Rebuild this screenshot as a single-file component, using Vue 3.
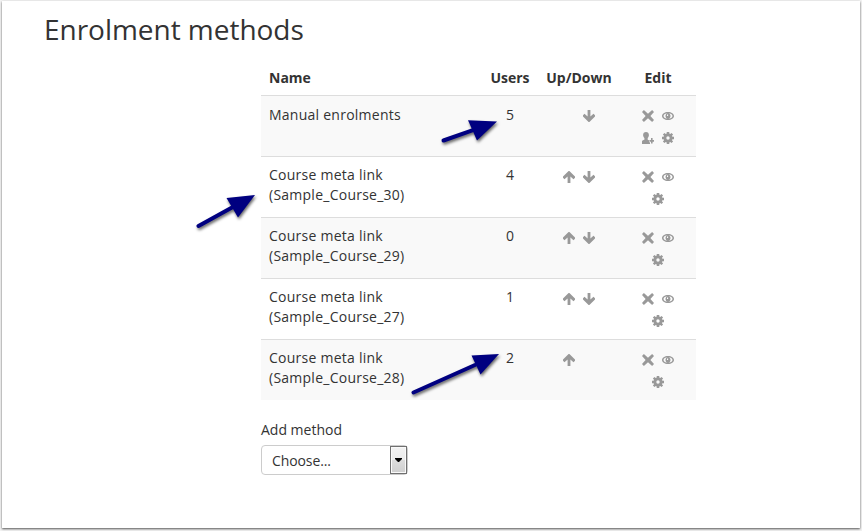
<script setup>
const rows = [
  { name: 'Manual enrolments', users: 5, moves: ['blank', 'down'], edit: ['close', 'eye', 'user', 'gear'] },
  { name: 'Course meta link (Sample_Course_30)', users: 4, moves: ['up', 'down'], edit: ['close', 'eye', 'gear'] },
  { name: 'Course meta link (Sample_Course_29)', users: 0, moves: ['up', 'down'], edit: ['close', 'eye', 'gear'] },
  { name: 'Course meta link (Sample_Course_27)', users: 1, moves: ['up', 'down'], edit: ['close', 'eye', 'gear'] },
  { name: 'Course meta link (Sample_Course_28)', users: 2, moves: ['up', 'blank'], edit: ['close', 'eye', 'gear'] },
]

const icons = {
  blank: '',
  up: 'M5.6 0H6.4L12 5.6V6.7L10.5 8.2 7.4 5.5V12H4.6V5.5L1.5 8.2 0 6.7V5.6Z',
  down: 'M5.6 12H6.4L12 6.4V5.3L10.5 3.8 7.4 6.5V0H4.6V6.5L1.5 3.8 0 5.3V6.4Z',
  close: 'M1.9 0 6 3.7 10.1 0 12 2 8.4 6 12 10 10.1 12 6 8.3 1.9 12 0 10 3.6 6 0 2Z',
  eye: 'M6 2C2.6 2 0 3.8 0 6s2.6 4 6 4 6-1.8 6-4S9.4 2 6 2ZM6 3.3C8.6 3.3 10.5 4.5 10.5 6S8.6 8.7 6 8.7 1.5 7.5 1.5 6 3.4 3.3 6 3.3ZM6 3.3C4.5 3.3 3.5 4.5 3.5 6S4.5 8.7 6 8.7 8.5 7.5 8.5 6 7.5 3.3 6 3.3ZM5 4.4H6.1V6H5Z',
  user: 'M4 0C5.8 0 6.9 1.1 6.9 3 6.9 4.4 6.3 5.4 5.7 6V7.8L7 8.3V10.2H8V12H0V9.4C0 8.6 1 8.2 2.4 7.8V6C1.8 5.4 1.1 4.4 1.1 3 1.1 1.1 2.2 0 4 0ZM9 6H10.6V8H12V9.8H10.6V11.6H9V9.8H7.4V8H9Z',
  gear: 'M4.7 0H7.3V1.6L8.3 2 9.5.9 11.1 2.5 10 3.7 10.4 4.7H12V7.3H10.4L10 8.3 11.1 9.5 9.5 11.1 8.3 10 7.3 10.4V12H4.7V10.4L3.7 10 2.5 11.1.9 9.5 2 8.3 1.6 7.3H0V4.7H1.6L2 3.7.9 2.5 2.5.9 3.7 2 4.7 1.6ZM6 4.3A1.7 1.7 0 1 0 6 7.7 1.7 1.7 0 1 0 6 4.3Z',
}

const pointers = [
  { x1: 443.5, y1: 140.5, x2: 473, y2: 130.2, head: '468,120.3 497,121.5 477,140.5' },
  { x1: 198.5, y1: 226, x2: 232, y2: 207.6, head: '226.5,198 255,195 238,217.5' },
  { x1: 413.5, y1: 392.5, x2: 475, y2: 365, head: '471.5,355.5 499,354 480.5,374.5' },
]
</script>

<template>
  <main class="page">
    <h2>Enrolment methods</h2>
    <table>
      <thead>
        <tr>
          <th class="name">Name</th>
          <th class="users">Users</th>
          <th class="order">Up/Down</th>
          <th class="edit">Edit</th>
        </tr>
      </thead>
      <tbody>
        <tr v-for="row in rows" :key="row.name">
          <td class="name">{{ row.name }}</td>
          <td class="users">{{ row.users }}</td>
          <td class="order">
            <div class="icons">
              <svg v-for="(icon, i) in row.moves" :key="i" viewBox="0 0 12 12"><path :d="icons[icon]" /></svg>
            </div>
          </td>
          <td class="edit">
            <div class="icons">
              <svg v-for="icon in row.edit" :key="icon" viewBox="0 0 12 12"><path :d="icons[icon]" /></svg>
            </div>
          </td>
        </tr>
      </tbody>
    </table>
    <div class="add">
      <label>Add method</label>
      <div class="select">
        <span>Choose...</span>
        <i class="toggle"><svg viewBox="0 0 7 4"><path d="M0 0H7V1L4 4H3L0 1Z" /></svg></i>
      </div>
    </div>
    <svg class="pointers" viewBox="0 0 862 531">
      <g v-for="(p, i) in pointers" :key="i">
        <line :x1="p.x1" :y1="p.y1" :x2="p.x2" :y2="p.y2" />
        <polygon :points="p.head" />
      </g>
    </svg>
  </main>
</template>

<style>
body {
  background: #f3f3f3;
  overflow: hidden;
}
</style>

<style scoped>
.page {
  box-sizing: border-box;
  width: 858px;
  height: 527px;
  margin: 1px 2px 3px;
  padding: 8px 42px 0;
  display: flow-root;
  background: #fff;
  box-shadow: 0 1px 2px rgba(0, 0, 0, 0.65);
  color: #333;
  font: 14px/20px "Open Sans", sans-serif;
}
h2 {
  margin: 0;
  font-size: 28px;
  line-height: 40px;
  font-weight: 400;
  letter-spacing: -0.03px;
}
table {
  width: 435px;
  margin: 10px 0 0 217px;
  border-collapse: separate;
  border-spacing: 0;
  table-layout: fixed;
}
th {
  height: 36px;
  box-sizing: border-box;
  padding: 9px 8px 7px;
  font-weight: 700;
}
td {
  height: 61px;
  box-sizing: border-box;
  border-top: 1px solid #ddd;
  padding: 8px;
  vertical-align: top;
}
th, td { text-align: center; }
.name { width: 221px; text-align: left; }
td.name { padding-right: 70px; letter-spacing: 0.25px; }
.users { width: 56px; }
.order { width: 82px; }
.edit { width: 76px; }
tbody tr:nth-child(odd) td { background: #f9f9f9; }
tbody tr:first-child td.name,
tbody tr:first-child td.users { padding-top: 9px; }
.icons {
  display: flex;
  flex-wrap: wrap;
  justify-content: center;
  gap: 10px 8px;
  width: 40px;
  margin: 6px auto 0;
}
.icons svg {
  width: 12px;
  height: 12px;
  fill: #999;
  fill-rule: evenodd;
}
.add { margin: 20px 0 0 217px; }
label { display: block; }
.select {
  box-sizing: border-box;
  display: flex;
  justify-content: space-between;
  width: 147px;
  height: 30px;
  margin-top: 5px;
  padding-left: 10px;
  border: 1px solid #ccc;
  border-radius: 4px;
  line-height: 30px;
}
.select span { letter-spacing: -0.1px; }
.toggle {
  box-sizing: border-box;
  display: flex;
  align-items: center;
  justify-content: center;
  width: 17px;
  height: 28px;
  border: 1px solid #707070;
  box-shadow: inset 0 0 0 1px #fafafa;
  background: linear-gradient(#f2f2f2 0%, #ebebeb 50%, #ddd 50%, #cfcfcf 100%);
}
.toggle svg { width: 7px; height: 4px; }
.pointers {
  position: absolute;
  left: 0;
  top: 0;
  width: 862px;
  height: 531px;
  filter: drop-shadow(1px 2px 1.5px rgba(0, 0, 0, 0.6));
  pointer-events: none;
}
.pointers line { stroke: #000080; stroke-width: 4; stroke-linecap: round; }
.pointers polygon { fill: #000080; }
</style>
